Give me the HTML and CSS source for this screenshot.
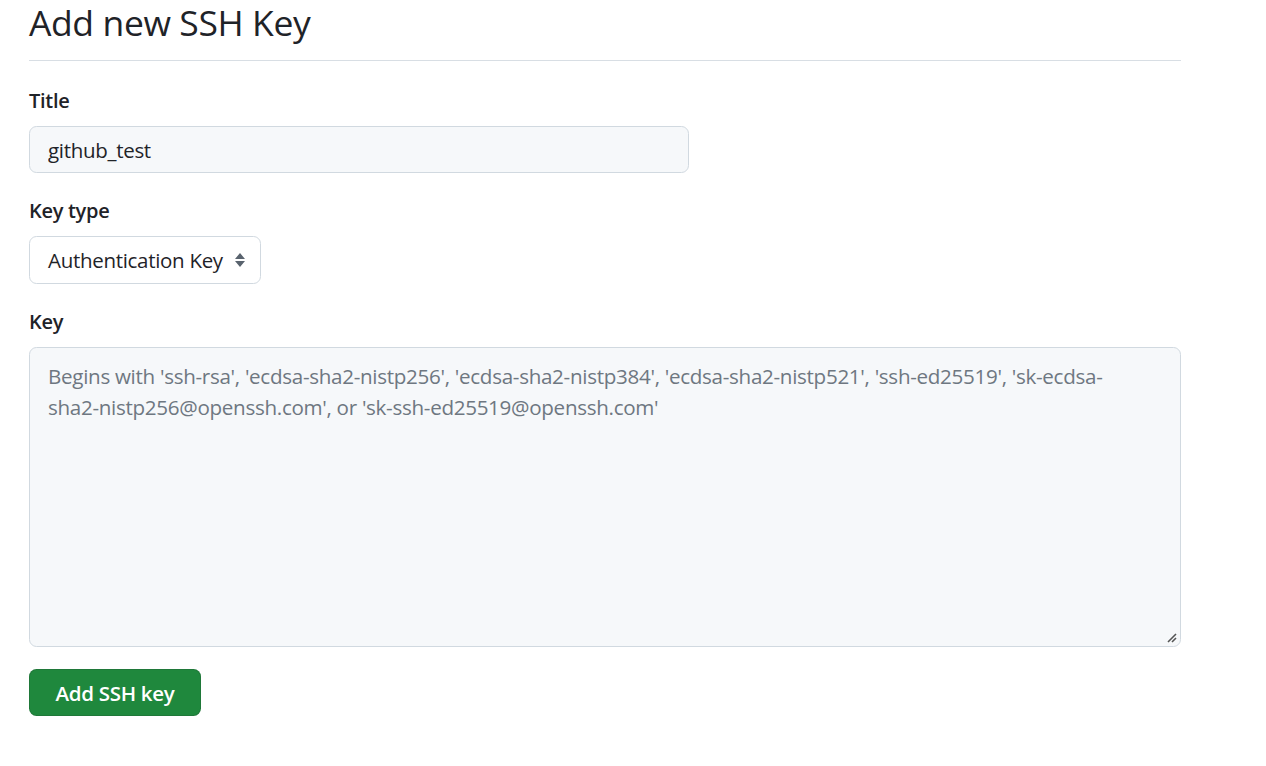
FILE: index.html
```html
<!DOCTYPE html>
<html>
<head>
<meta charset="utf-8">
<link rel="stylesheet" href="styles.css">
</head>
<body>
<main class="page">
  <div class="subhead">
    <h1 class="subhead-title">Add new SSH Key</h1>
  </div>
  <form class="form">
    <div class="group">
      <label class="label" for="title">Title</label>
      <input class="input title-input" id="title" type="text" value="github_test">
    </div>
    <div class="group">
      <label class="label" for="type">Key type</label>
      <div class="select">
        <span class="select-text">Authentication Key</span>
        <svg class="select-arrow" width="12" height="18" viewBox="0 0 12 18"><path d="M6 2 L11 8 H1 Z M1 10 H11 L6 16 Z" fill="#59636e"/></svg>
      </div>
    </div>
    <div class="group">
      <label class="label" for="key">Key</label>
      <div class="textarea">
        <span class="placeholder">Begins with 'ssh-rsa', 'ecdsa-sha2-nistp256', 'ecdsa-sha2-nistp384', 'ecdsa-sha2-nistp521', 'ssh-ed25519', 'sk-ecdsa-sha2-nistp256@openssh.com', or 'sk-ssh-ed25519@openssh.com'</span>
        <svg class="grip" width="12" height="12" viewBox="0 0 12 12"><path d="M11 3 L3 11 M11 7 L7 11" stroke="#555" stroke-width="1.6" fill="none"/></svg>
      </div>
    </div>
    <div class="actions">
      <button class="btn" type="button">Add SSH key</button>
    </div>
  </form>
</main>
</body>
</html>
```
FILE: styles.css
```css
html, body {
  margin: 0;
  padding: 0;
  background: #ffffff;
}
body {
  font-family: "Open Sans", "Noto Sans", sans-serif;
  color: #1f2328;
}
.page {
  width: 1152px;
  padding-left: 29px;
}
.subhead {
  border-bottom: 1px solid #d8dee4;
  height: 61px;
  box-sizing: border-box;
}
.subhead-title {
  margin: 0;
  padding-top: 0;
  font-size: 35.5px;
  font-weight: 400;
  line-height: 44px;
  letter-spacing: -0.4px;
}
.form {
  display: flex;
  flex-direction: column;
}
.group {
  display: flex;
  flex-direction: column;
  align-items: flex-start;
}
.group:first-child {
  padding-top: 27px;
}
.group + .group {
  margin-top: 25px;
}
.label {
  font-size: 20px;
  font-weight: 600;
  line-height: 26px;
  margin-bottom: 12px;
  letter-spacing: -0.3px;
}
.input {
  box-sizing: border-box;
  width: 660px;
  height: 47px;
  padding: 0 18px;
  border: 1px solid #d1d9e0;
  border-radius: 7.5px;
  background: #f6f8fa;
  font-family: inherit;
  font-size: 20.5px;
  color: #1f2328;
  letter-spacing: -0.3px;
  outline: none;
}
.select {
  box-sizing: border-box;
  height: 48px;
  width: 232px;
  display: flex;
  align-items: center;
  justify-content: space-between;
  padding: 0 14px 0 18px;
  border: 1px solid #d1d9e0;
  border-radius: 7.5px;
  background: #ffffff;
  font-size: 20.5px;
  letter-spacing: -0.3px;
}
.textarea {
  position: relative;
  box-sizing: border-box;
  width: 1152px;
  height: 300px;
  padding: 13px 32px 14px 18px;
  border: 1px solid #d1d9e0;
  border-radius: 7.5px;
  background: #f6f8fa;
  font-size: 20.6px;
  line-height: 31px;
  letter-spacing: -0.3px;
}
.placeholder {
  color: #6e7781;
}
.grip {
  position: absolute;
  right: 3px;
  bottom: 3px;
}
.actions {
  margin-top: 22px;
}
.btn {
  box-sizing: border-box;
  height: 47px;
  width: 172px;
  border: 1px solid rgba(31, 35, 40, 0.15);
  border-radius: 7.5px;
  background: #1f883d;
  color: #ffffff;
  font-family: inherit;
  font-size: 20.5px;
  font-weight: 600;
  letter-spacing: -0.3px;
  padding: 0;
}
```
